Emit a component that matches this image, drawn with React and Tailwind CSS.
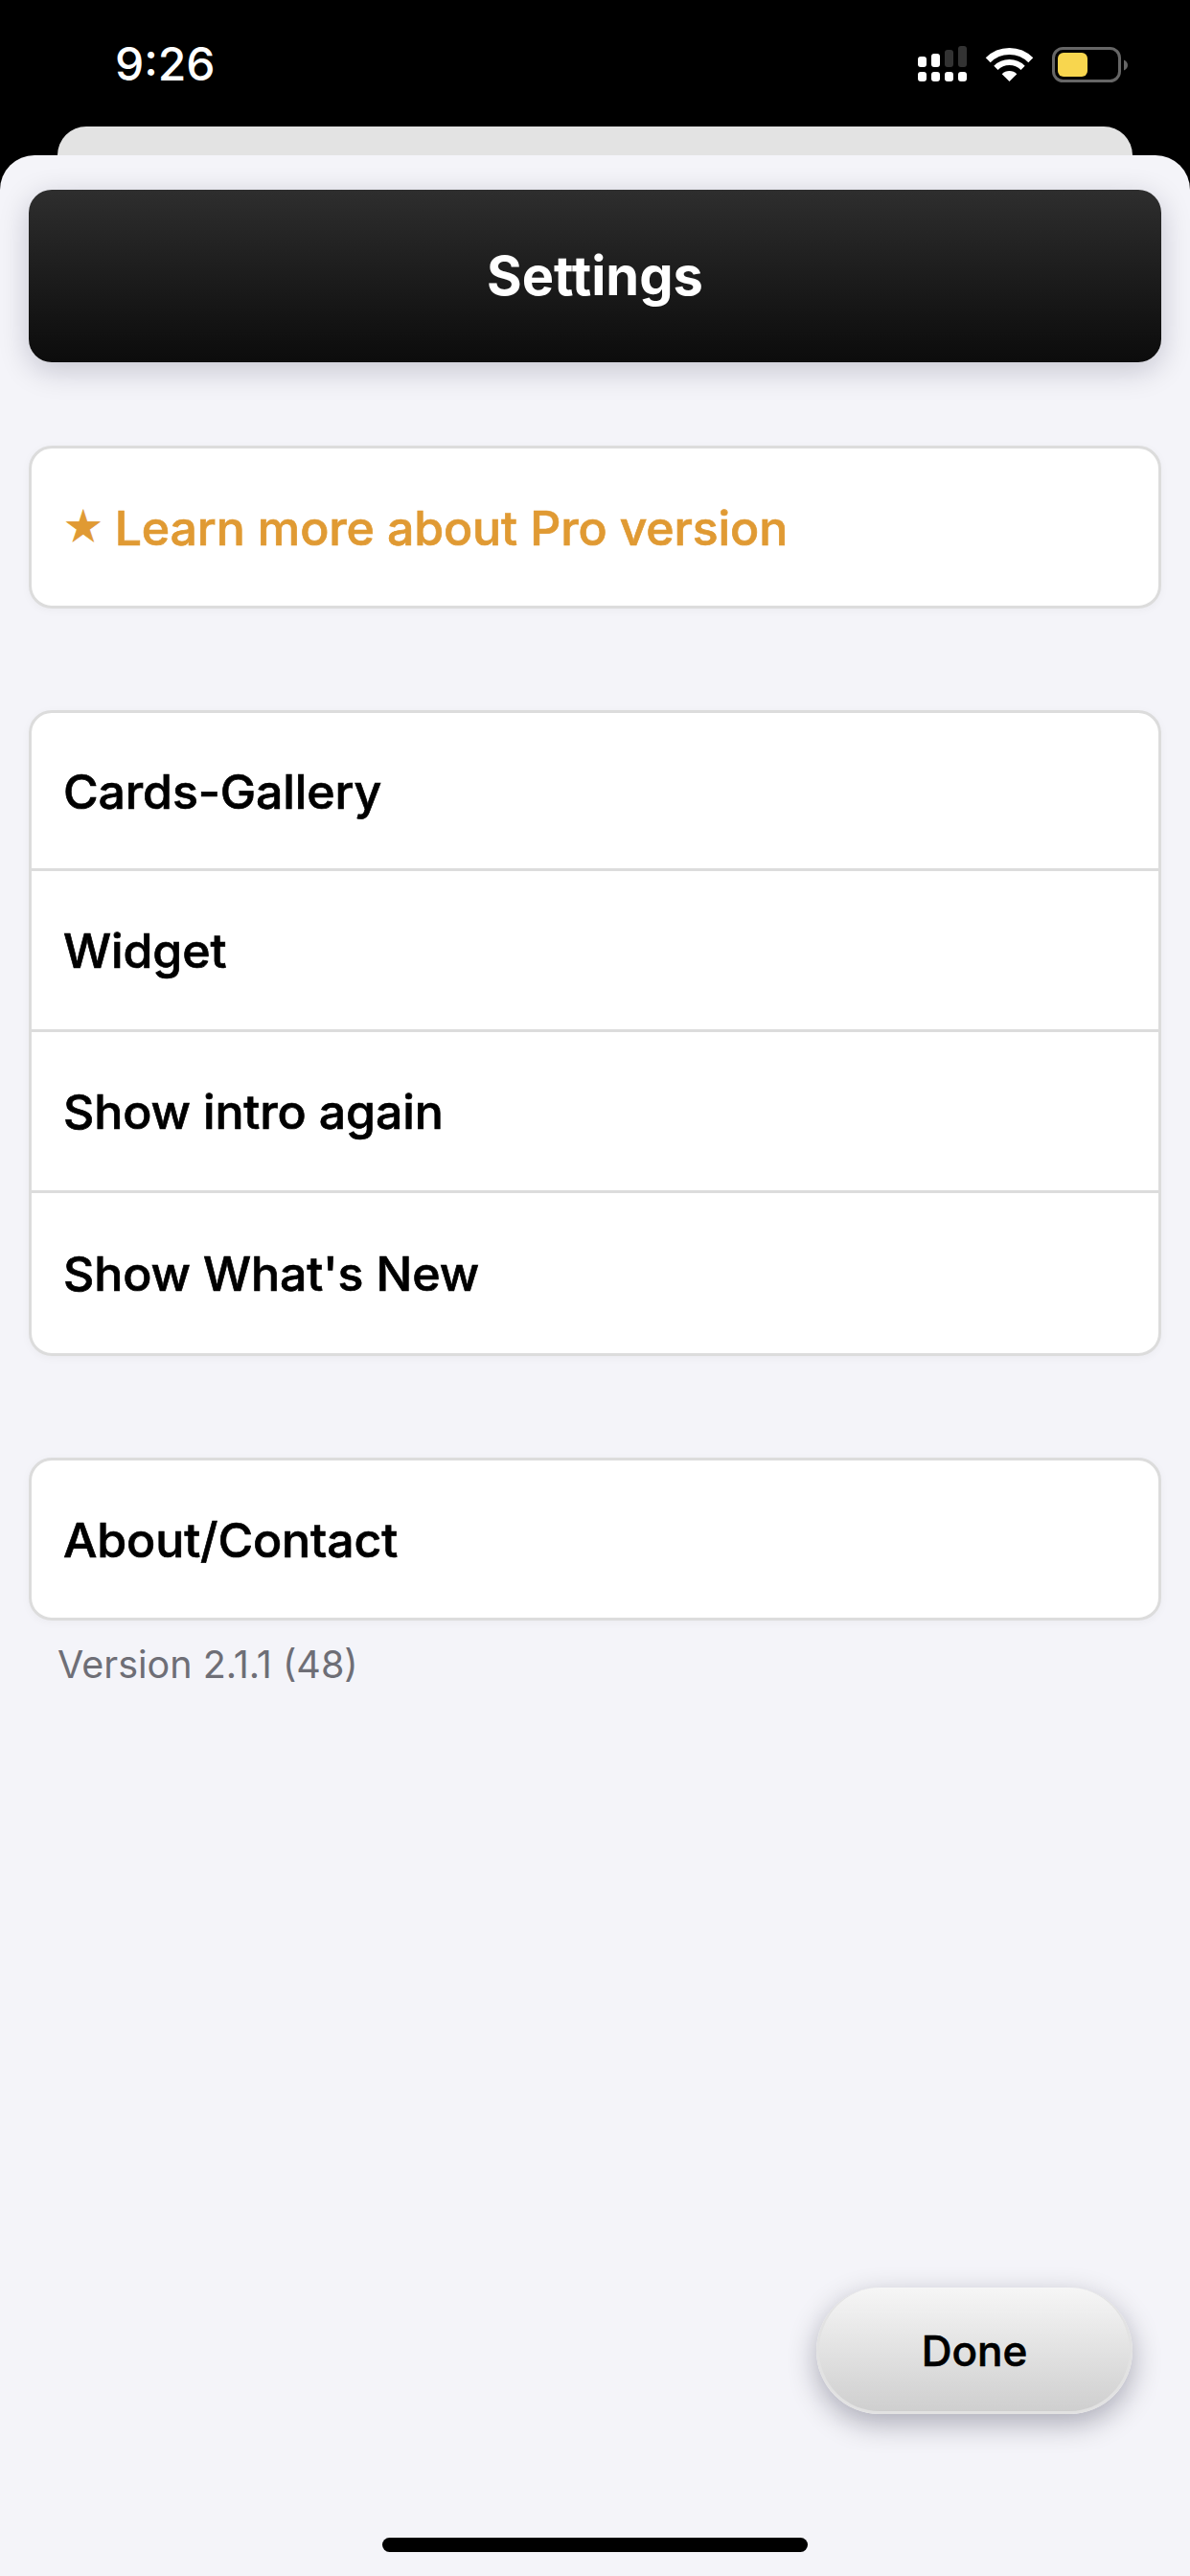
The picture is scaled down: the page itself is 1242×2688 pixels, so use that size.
import React from 'react';

const font = "font-['Inter','Noto_Sans',sans-serif]";

const StatusIcons = () => (
  <svg width="220" height="40" viewBox="0 0 220 40" className="block">
    {/* cell bars */}
    <rect x="0" y="27" width="9" height="10" rx="3" fill="#fff" />
    <rect x="14" y="27" width="9" height="10" rx="3" fill="#fff" />
    <rect x="28" y="27" width="9" height="10" rx="3" fill="#fff" />
    <rect x="42" y="27" width="9" height="10" rx="3" fill="#fff" />
    <rect x="0" y="11" width="9" height="11" rx="3" fill="#fff" />
    <rect x="14" y="8" width="9" height="14" rx="3" fill="#fff" />
    <rect x="28" y="4" width="9" height="18" rx="3" fill="#333" />
    <rect x="42" y="0" width="9" height="22" rx="3" fill="#333" />
    {/* wifi */}
    <g transform="translate(72 1)" fill="none" stroke="#fff">
      <path d="M1.2 13.7A31.5 31.5 0 0 1 45.8 13.7" strokeWidth="7" />
      <path d="M9.4 21.9A20 20 0 0 1 37.6 21.9" strokeWidth="6" />
      <path d="M23.5 36L15.7 28.2A11 11 0 0 1 31.3 28.2Z" fill="#fff" stroke="none" />
    </g>
    {/* battery */}
    <rect x="141.5" y="2.5" width="69" height="34" rx="10" fill="none" stroke="#666" strokeWidth="3" />
    <rect x="146" y="7" width="31" height="25" rx="6" fill="#f8d64e" />
    <path d="M215 14.5C217.5 15.5 219 17.5 219 20S217.5 24.5 215 25.5Z" fill="#666" />
  </svg>
);

const Row = ({ children, h = 'h-[164px]', color = 'text-black' }) => (
  <div className={`${h} flex items-center pl-[33px] pt-[2px] text-[50px] font-medium tracking-[-0.12px] [-webkit-text-stroke:0.7px_currentColor] ${color}`}>
    {children}
  </div>
);

const Group = ({ children, className = '' }) => (
  <div
    className={`rounded-[24px] border-[3px] border-[#dcdcdc] bg-white divide-y-[3px] divide-[#dcdcdc] shadow-[0_2px_10px_rgba(0,0,0,0.04)] ${className}`}
  >
    {children}
  </div>
);

export default function App() {
  return (
    <div className={`w-[1242px] h-[2688px] bg-black flex flex-col overflow-hidden ${font}`}>
      <div className="h-[132px] shrink-0 flex justify-between pl-[120px] pr-[64px] pt-[38px]">
        <div className="text-white text-[48px] leading-[58px] font-medium">9:26</div>
        <div className="pt-[10px]">
          <StatusIcons />
        </div>
      </div>
      <div className="h-[30px] shrink-0 mx-[60px] rounded-t-[30px] bg-[#e3e3e3]" />
      <div className="flex-1 rounded-t-[36px] bg-[#f4f4f9] px-[30px] pt-[36px] flex flex-col">
        <div className="h-[180px] shrink-0 rounded-[24px] bg-gradient-to-b from-[#2e2e2e] to-[#0c0c0c] flex items-center justify-center text-white text-[56px] font-bold shadow-[0_8px_32px_rgba(0,0,40,0.2)]">
          Settings
        </div>
        <Group className="mt-[87px]">
          <Row color="text-[#e09a33]">
            <span className="text-[40px] mr-[12px]">★</span>Learn more about Pro version
          </Row>
        </Group>
        <Group className="mt-[106px]">
          <Row h="h-[165px]">Cards-Gallery</Row>
          <Row h="h-[168px]">Widget</Row>
          <Row h="h-[168px]">Show intro again</Row>
          <Row h="h-[167px]">Show What's New</Row>
        </Group>
        <Group className="mt-[106px]">
          <Row>About/Contact</Row>
        </Group>
        <div className="mt-[22px] pl-[30px] text-[39.5px] leading-[48px] text-[#6e6e76]">Version 2.1.1 (48)</div>
        <div className="mt-auto self-end mr-[30px] w-[330px] h-[132px] rounded-full bg-gradient-to-b from-[#f6f6f6] to-[#cfcfcf] border-[3px] border-[#e2e2e2] border-t-0 flex items-center justify-center pt-[3px] text-[44px] font-medium [-webkit-text-stroke:0.6px_currentColor] text-black shadow-[0_10px_30px_rgba(0,0,30,0.3)]">
          Done
        </div>
        <div className="mt-[129px] mb-[25px] self-center w-[444px] h-[15px] rounded-full bg-black" />
      </div>
    </div>
  );
}
